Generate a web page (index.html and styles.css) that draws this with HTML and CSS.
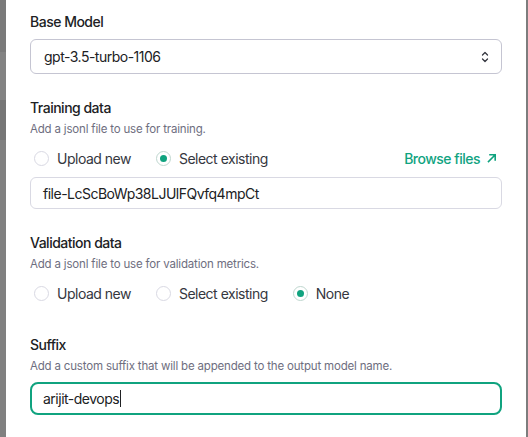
FILE: index.html
```html
<!DOCTYPE html>
<html>
<head>
<meta charset="utf-8">
<link rel="stylesheet" href="styles.css">
</head>
<body>
<div class="page">
  <div class="backdrop">
    <div class="band band-a"></div>
    <div class="band band-b"></div>
    <div class="band band-c"></div>
    <div class="band band-d"></div>
  </div>
  <main class="panel">
    <section class="field field-model">
      <div class="label">Base Model</div>
      <div class="select">
        <span>gpt-3.5-turbo-1106</span>
        <svg class="updown" width="10" height="14" viewBox="0 0 10 14"><path d="M2.5 5 L5 2.5 L7.5 5" fill="none" stroke="#353740" stroke-width="1.3" stroke-linecap="round" stroke-linejoin="round"/><path d="M2.5 9 L5 11.5 L7.5 9" fill="none" stroke="#353740" stroke-width="1.3" stroke-linecap="round" stroke-linejoin="round"/></svg>
      </div>
    </section>

    <section class="field field-training">
      <div class="label">Training data</div>
      <div class="desc">Add a jsonl file to use for training.</div>
      <div class="radio-row">
        <label class="radio"><span class="dot"></span>Upload new</label>
        <label class="radio on"><span class="dot"></span>Select existing</label>
        <a class="browse">Browse files
          <svg width="12" height="12" viewBox="0 0 12 12"><path d="M2.5 9.5 L9 3 M4 2.8 H9.2 V8" fill="none" stroke="#10a37f" stroke-width="1.6" stroke-linecap="square"/></svg>
        </a>
      </div>
      <div class="input">file-LcScBoWp38LJUlFQvfq4mpCt</div>
    </section>

    <section class="field field-validation">
      <div class="label">Validation data</div>
      <div class="desc">Add a jsonl file to use for validation metrics.</div>
      <div class="radio-row">
        <label class="radio"><span class="dot"></span>Upload new</label>
        <label class="radio"><span class="dot"></span>Select existing</label>
        <label class="radio on"><span class="dot"></span>None</label>
      </div>
    </section>

    <section class="field field-suffix">
      <div class="label">Suffix</div>
      <div class="desc">Add a custom suffix that will be appended to the output model name.</div>
      <div class="input focus">arijit-devops<span class="caret"></span></div>
    </section>
  </main>
  <div class="edge"></div>
</div>
</body>
</html>
```
FILE: styles.css
```css
* { box-sizing: border-box; }
html, body { margin: 0; padding: 0; background: #fff; }
body {
  font-family: "Inter", "Noto Sans", sans-serif;
  color: #202123;
  font-size: 14px;
  letter-spacing: -0.5px;
}
.page {
  display: flex;
  width: 528px;
  height: 437px;
  overflow: hidden;
}
.backdrop {
  width: 6px;
  flex: none;
  display: flex;
  flex-direction: column;
  background: #808080;
  overflow: hidden;
}
.band { width: 6px; }
.band-a { height: 52px; background: #7a7a7a; }
.band-b { height: 48px; background: #838383; }
.band-c { height: 40px; background: #767676; }
.band-d { flex: 1; background: #808080; }
.edge {
  width: 2px;
  flex: none;
  background: #7d7d7d;
}
.panel {
  flex: 1;
  background: #fff;
  padding: 12px 24px 0 24px;
  display: flex;
  flex-direction: column;
}
.label {
  font-size: 14px;
  font-weight: 500;
  line-height: 20px;
}
.desc {
  font-size: 11.5px;
  line-height: 16px;
  color: #6e6e80;
  margin-top: 3px;
  letter-spacing: -0.18px;
}
.select {
  margin-top: 7px;
  height: 35px;
  border: 1px solid #c5c5d2;
  border-radius: 6px;
  display: flex;
  align-items: center;
  justify-content: space-between;
  padding: 0 11px 0 13px;
  font-size: 14px;
}
.updown { display: block; }
.field-training { margin-top: 24px; }
.radio-row {
  display: flex;
  align-items: center;
  height: 24px;
  margin-top: 9px;
  padding-left: 4px;
}
.radio {
  display: flex;
  align-items: center;
  gap: 8px;
  font-size: 14px;
  margin-right: 25px;
  color: #353740;
}
.dot {
  width: 15px;
  height: 15px;
  border-radius: 50%;
  border: 1px solid #d9d9e3;
  display: flex;
  align-items: center;
  justify-content: center;
  background: #fff;
}
.radio.on .dot { border-color: #bfd7cf; }
.radio.on .dot::after {
  content: "";
  width: 7px;
  height: 7px;
  border-radius: 50%;
  background: #10a37f;
}
.browse {
  margin-left: auto;
  color: #10a37f;
  font-weight: 500;
  font-size: 14px;
  display: flex;
  align-items: center;
  gap: 6px;
  margin-right: 4px;
}
.input {
  margin-top: 7px;
  height: 32px;
  border: 1px solid #d9d9e3;
  border-radius: 6px;
  display: flex;
  align-items: center;
  padding: 0 12px;
  font-size: 14px;
  color: #202123;
}
.field-validation { margin-top: 24px; }
.field-suffix { margin-top: 30px; }
.input.focus {
  margin-top: 8px;
  height: 33px;
  border: 2px solid #10a37f;
  border-radius: 8px;
  padding: 0 11px;
}
.caret {
  width: 1px;
  height: 17px;
  background: #202123;
  margin-left: 1px;
}
```
